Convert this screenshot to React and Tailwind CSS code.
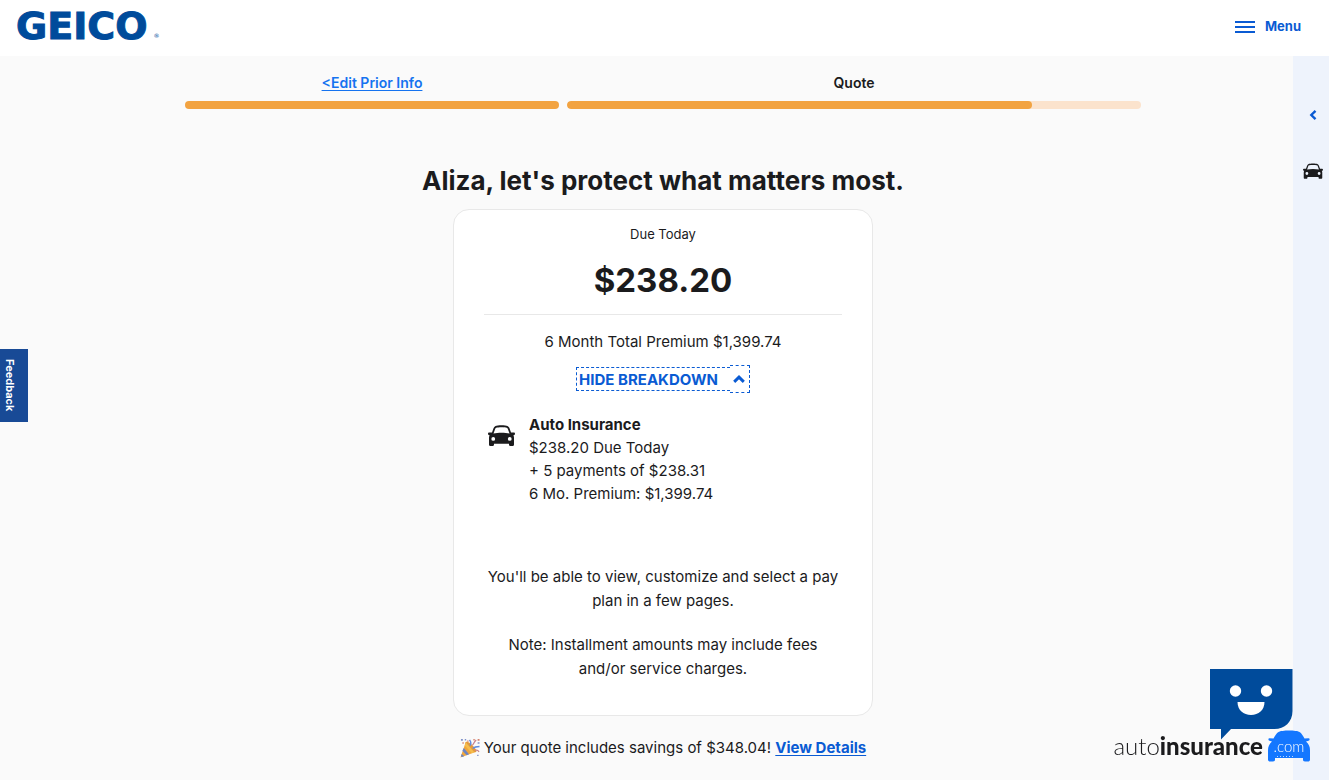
import React, { useState } from "react";

function CarIcon({ className }) {
  return (
    <svg viewBox="0 0 54 42" className={className} aria-hidden="true">
      <path
        fillRule="evenodd"
        fill="currentColor"
        d="M15 2C19 0 35 0 39 2c2 .900 3.200 2.500 4 4.500L46 15h5.500c1.500 0 2.500 1 2.500 2.600 0 1.600-1 2.700-2.500 2.700h-.700c.800 1.500 1.200 3.300 1.200 5.200V39c0 1.700-1 3-2.700 3h-4.600c-1.700 0-2.700-1.300-2.700-3v-1.500H12V39c0 1.700-1 3-2.700 3H4.700C3 42 2 40.700 2 39V25.500c0-1.900.400-3.700 1.200-5.200h-.700C1 20.300 0 19.200 0 17.600 0 16 1 15 2.500 15H8l3-8.500C11.800 4.500 13 2.900 15 2zM16.500 5.700c-1.200.500-1.900 1.300-2.400 2.600L11 17c9-2 23-2 32 0l-3.100-8.700c-.500-1.300-1.200-2.100-2.400-2.600-3.500-1.500-17.500-1.500-21 0zM10.500 24a3.800 3.800 0 1 0 0 7.600 3.800 3.800 0 0 0 0-7.600zM43.500 24a3.800 3.800 0 1 0 0 7.600 3.800 3.800 0 0 0 0-7.600z"
      />
    </svg>
  );
}

function PartyPopper() {
  return (
    <svg viewBox="0 0 42 42" className="h-5 w-5 shrink-0" role="img" aria-label="Party popper">
      <path d="M12 9 1 41 34 29Z" fill="#f0a63c" />
      <path d="M12 9c2-3 9 1 14.500 6.500S36 27 34 29s-9-.500-14-5.500S10 13 12 9Z" fill="#e39a3e" />
      <path d="M8 21 19 34 14 36 5 27ZM3.500 33.500 9 38.500 4 40 2 38Z" fill="#6b84c4" />
      <path d="M12 9 10 16 25 32 30 30Z" fill="#f6bd4d" />
      <path d="M21 16c3-4 2-8-1-12M27 22c4-4 8-4 14-4" fill="none" stroke="#5d8be0" strokeWidth="3" />
      <path d="M26 15c4-3 3-7 8-11M32 26c4-2 6 0 8 3" fill="none" stroke="#c9818c" strokeWidth="2.600" />
      <g fill="#8193c9">
        <path d="M2 2h4v4H2zM10 2h3v3h-3zM37 9h4v3h-4zM36 35h3v3h-3z" />
      </g>
      <g fill="#d6836f">
        <path d="M5 9h3v3H5zM28 2h3v3h-3zM37 2h4v4h-4zM15 5h3v3h-3z" />
      </g>
    </svg>
  );
}

function Header() {
  return (
    <header className="flex h-14 items-center justify-between bg-white pb-1 pl-4 pr-7">
      <a
        href="#home"
        className="flex items-end gap-1.5 font-['DejaVu_Sans',sans-serif] text-[38px] font-bold leading-[44px] text-[#004b9b]"
      >
        <span className="[-webkit-text-stroke:1px_#004b9b]">GEICO</span>
        <span className="pb-1.5 text-[6px] font-normal leading-3">®</span>
      </a>
      <button type="button" className="flex items-center gap-2.5 text-[13px] font-bold leading-5 text-[#0a5bd3]">
        <span className="flex w-5 flex-col gap-[3px] pt-0.5">
          <span className="h-0.5 bg-[#0a5bd3]" />
          <span className="h-0.5 bg-[#0a5bd3]" />
          <span className="h-0.5 bg-[#0a5bd3]" />
        </span>
        Menu
      </button>
    </header>
  );
}

function Progress() {
  return (
    <nav aria-label="Quote progress" className="grid w-full max-w-[956px] grid-cols-[374fr_574fr] gap-2 text-center text-sm leading-5">
      <div className="flex flex-col gap-2">
        <a href="#prior" className="font-semibold text-[#1573f0] underline underline-offset-2">
          &lt;Edit Prior Info
        </a>
        <div className="h-2 rounded-full bg-[#f2a341]" />
      </div>
      <div className="flex flex-col gap-2">
        <span className="font-semibold">Quote</span>
        <div className="h-2 overflow-hidden rounded-full bg-[#fbe3cd]">
          <div className="h-2 w-[81%] rounded-full bg-[#f2a341]" />
        </div>
      </div>
    </nav>
  );
}

function QuoteCard() {
  const [open, setOpen] = useState(true);
  return (
    <section className="flex w-full max-w-[420px] flex-col rounded-2xl border border-[#e8e8e8] bg-white px-[30px] pb-[34px] pt-3.5 text-center">
      <p className="text-[13px] leading-5">Due Today</p>
      <p className="mt-3 text-[33px] font-bold leading-[48px]">$238.20</p>
      <hr className="mt-2.5 border-[#e8e8e8]" />
      <p className="mt-[15px] leading-6">6 Month Total Premium $1,399.74</p>
      <button
        type="button"
        aria-expanded={open}
        onClick={() => setOpen(!open)}
        className="mt-[11px] flex items-center self-center font-bold text-[#0a5bd3]"
      >
        <span className="h-6 border border-r-0 border-dashed border-[#0a5bd3] pl-0.5 pr-3">
          <span className="block leading-6">HIDE BREAKDOWN</span>
        </span>
        <span className="flex h-7 w-5 items-center justify-center border border-l-0 border-dashed border-[#0a5bd3]">
          <svg viewBox="0 0 12 8" className="h-2 w-3" aria-hidden="true">
            <path d="M1.200 6.800 6 2.200l4.800 4.600" fill="none" stroke="currentColor" strokeWidth="3" />
          </svg>
        </span>
      </button>
      {open && (
        <div className="mt-5 flex gap-3.5 pl-1 text-left">
          <CarIcon className="mt-3 h-[21px] w-[27px] shrink-0" />
          <div className="leading-[23px]">
            <h2 className="font-bold">Auto Insurance</h2>
            <p>$238.20 Due Today</p>
            <p>+ 5 payments of $238.31</p>
            <p>6 Mo. Premium: $1,399.74</p>
          </div>
        </div>
      )}
      <p className="mt-[60px] leading-6">You'll be able to view, customize and select a pay plan in a few pages.</p>
      <p className="mt-5 px-3 leading-6">Note: Installment amounts may include fees and/or service charges.</p>
    </section>
  );
}

function SidePanel() {
  return (
    <aside className="flex w-9 shrink-0 flex-col items-center bg-[#eef3fc] pl-1 pt-[51px]">
      <button type="button" aria-label="Expand panel" className="flex h-4 w-5 items-center justify-center text-[#0a5bd3]">
        <svg viewBox="0 0 8 12" className="h-3 w-2" aria-hidden="true">
          <path d="M6.500 1.800 2.300 6l4.200 4.200" fill="none" stroke="currentColor" strokeWidth="2.400" />
        </svg>
      </button>
      <button type="button" aria-label="Vehicles" className="mt-10">
        <CarIcon className="h-4 w-5" />
      </button>
    </aside>
  );
}

function Overlays() {
  return (
    <>
      <button
        type="button"
        className="fixed left-0 top-[349px] flex h-[73px] w-7 items-center justify-center bg-[#184a96] pr-2 text-[11px] font-bold text-white [writing-mode:vertical-rl]"
      >
        Feedback
      </button>
      <button type="button" aria-label="Open chat" className="fixed bottom-10 right-9">
        <svg viewBox="0 0 83 72" className="h-[72px] w-[83px]" aria-hidden="true">
          <path d="M0 1h82.500v42c0 11-8 18-18 18H21L11 71.500V61H0Z" fill="#004b9b" />
          <circle cx="25.500" cy="23" r="5.700" fill="#fff" />
          <circle cx="56.500" cy="23" r="5.700" fill="#fff" />
          <path d="M27.500 34h27c0 8-6 13-13.500 13s-13.500-5-13.500-13Z" fill="#fff" />
        </svg>
      </button>
      <div className="pointer-events-none fixed bottom-[18px] right-[18px] flex items-center gap-1 font-[Lato,sans-serif] text-2xl leading-8">
        <span>
          <span className="font-light">auto</span>
          <span className="font-black">insurance</span>
        </span>
        <svg viewBox="0 0 44 32" className="h-8 w-11" aria-hidden="true">
          <path
            d="M11.500 2c3-2 18-2 21 0 2 1 3.500 4 5 6.500l4-.300c1.500 0 1.500 2 0 2.500L39 11.500c3 3 4 5 4 9v9c0 1.500-1 2-2 2h-3c-1.500 0-2-1-2-2v-1.500H8v1.500c0 1-.500 2-2 2H3c-1 0-2-.500-2-2v-9c0-4 1-6 4-9l-2.500-.800C1 10.200 1 8.200 2.500 8.200l4 .300c1.500-2.500 3-5.500 5-6.500Z"
            fill="#1477ff"
          />
          <path d="M10 26.500h17" stroke="#b8d5ff" strokeDasharray="1 2" />
          <text x="22" y="21.500" textAnchor="middle" fill="#fff" fontFamily="Lato, sans-serif" fontWeight="300" fontSize="15">
            .com
          </text>
        </svg>
      </div>
    </>
  );
}

export default function App() {
  return (
    <div className="flex min-h-screen flex-col bg-[#fafafa] font-[Inter,sans-serif] text-[15px] text-[#1b1b1d]">
      <Header />
      <div className="flex flex-1">
        <main className="flex flex-1 flex-col items-center pb-5 pl-[33px] pt-[17px]">
          <Progress />
          <h1 className="mt-[52px] text-center text-[26px] font-bold leading-10">Aliza, let's protect what matters most.</h1>
          <div className="mt-2 flex w-full justify-center">
            <QuoteCard />
          </div>
          <p className="mt-5 flex items-center gap-1 leading-6">
            <PartyPopper />
            <span>
              Your quote includes savings of $348.04!{" "}
              <a href="#savings" className="font-bold text-[#0a5bd3] underline underline-offset-2">
                View Details
              </a>
            </span>
          </p>
        </main>
        <SidePanel />
      </div>
      <Overlays />
    </div>
  );
}
